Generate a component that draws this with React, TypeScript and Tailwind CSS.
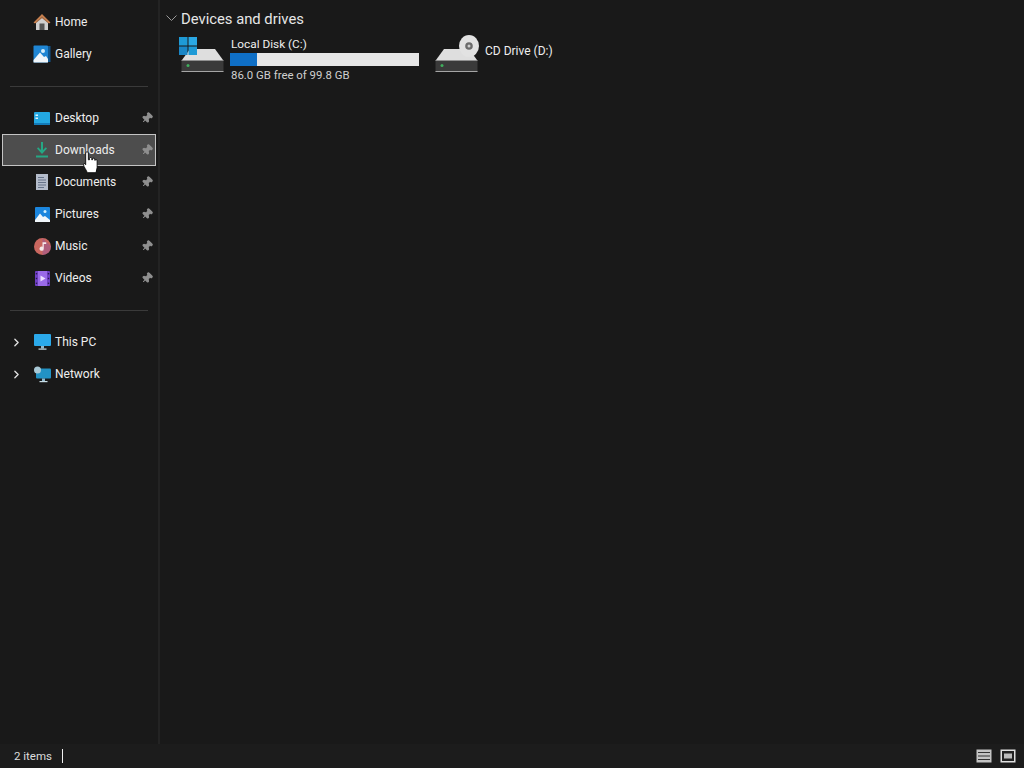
import { ChevronRight, Pin } from "lucide-react";
import type { ReactNode } from "react";

function HomeIcon() {
  return (
    <svg width="18" height="18" viewBox="0 0 18 18">
      <path d="M3 8 9 2.500l6 5.500v9H3z" fill="#cfcfcf" />
      <path d="M0.500 9.500 9 1l8.500 8.500-1.500 1L9 5 2 10.500z" fill="#c9814f" />
      <path d="M3 9 9 3.500 15 9v1L9 5 3 10z" fill="#9c6a48" />
      <rect x="6.500" y="10.500" width="5" height="6.500" fill="#555555" />
    </svg>
  );
}

function GalleryIcon() {
  return (
    <svg width="18" height="18" viewBox="0 0 18 18">
      <rect x="14" y="1" width="3.500" height="16" fill="#12578f" />
      <rect x="0.500" y="0.500" width="14.500" height="17" rx="1" fill="#1f86d4" />
      <circle cx="10" cy="6" r="2" fill="#d5effb" />
      <path d="M0.500 15 7 7.500l4 4.500 2-1 2 3v3.500H0.500z" fill="#f0f6fa" />
    </svg>
  );
}

function DesktopIcon() {
  return (
    <svg width="16" height="13" viewBox="0 0 16 13">
      <rect width="16" height="13" rx="1" fill="#23a8e2" />
      <rect x="1.500" y="2.500" width="2.500" height="1.500" fill="#e2f6ff" />
      <rect x="1.500" y="5.500" width="2.500" height="1.500" fill="#e2f6ff" />
      <rect y="11" width="16" height="2" fill="#127ab8" />
    </svg>
  );
}

function DownloadsIcon() {
  return (
    <svg width="14" height="16" viewBox="0 0 14 16">
      <rect x="6" y="0" width="2" height="9" fill="#25a784" />
      <path d="M2 6.500 3.200 5.300 7 9l3.800-3.700L12 6.500 7 12z" fill="#25a784" />
      <rect x="1" y="13.500" width="12" height="2" fill="#25a784" />
    </svg>
  );
}

function DocumentsIcon() {
  return (
    <svg width="12" height="16" viewBox="0 0 12 16">
      <rect width="12" height="16" fill="#b4bccb" />
      <rect x="2" y="3" width="6" height="1" fill="#66738a" />
      <rect x="2" y="5.500" width="8" height="1" fill="#66738a" />
      <rect x="2" y="8" width="8" height="1" fill="#66738a" />
      <rect x="2" y="10.500" width="8" height="1" fill="#66738a" />
      <rect x="2" y="13" width="6" height="1" fill="#66738a" />
    </svg>
  );
}

function PicturesIcon() {
  return (
    <svg width="15" height="15" viewBox="0 0 15 15">
      <rect width="15" height="15" rx="1" fill="#1b86de" />
      <circle cx="10" cy="4.500" r="1.500" fill="#cfeefc" />
      <path d="M0 13 5 6.500l3 3.500 2-1 5 4v2H0z" fill="#f0f6fa" />
    </svg>
  );
}

function MusicIcon() {
  return (
    <svg width="17" height="17" viewBox="0 0 16 16">
      <circle cx="8" cy="8" r="8" fill="#c9675f" />
      <path d="M16 8a8 8 0 0 1-8 8V0z" fill="#a0588f" opacity="0.6" />
      <path d="M8 4h3.500v1.600H9.200V10a2 2 0 1 1-1.200-1.800z" fill="#f7e9ea" />
    </svg>
  );
}

function VideosIcon() {
  return (
    <svg width="15" height="15" viewBox="0 0 15 15">
      <rect width="15" height="15" rx="1" fill="#6f3fc4" />
      <rect x="3" y="0" width="9" height="15" fill="#9a6ae8" />
      <path d="M5.500 4.500v6l5-3z" fill="#ecdfff" />
      <rect x="0.800" y="2" width="1.400" height="1.400" fill="#2a1a4d" />
      <rect x="0.800" y="6.800" width="1.400" height="1.400" fill="#2a1a4d" />
      <rect x="0.800" y="11.600" width="1.400" height="1.400" fill="#2a1a4d" />
      <rect x="12.800" y="2" width="1.400" height="1.400" fill="#2a1a4d" />
      <rect x="12.800" y="6.800" width="1.400" height="1.400" fill="#2a1a4d" />
      <rect x="12.800" y="11.600" width="1.400" height="1.400" fill="#2a1a4d" />
    </svg>
  );
}

function ThisPcIcon() {
  return (
    <svg width="17" height="16" viewBox="0 0 17 16">
      <rect width="17" height="12" rx="1" fill="#2ba9ea" />
      <rect x="7" y="12" width="3" height="2.500" fill="#8fb8cc" />
      <rect x="4.500" y="14.500" width="8" height="1.200" fill="#c9dde6" />
    </svg>
  );
}

function NetworkIcon() {
  return (
    <svg width="18" height="17" viewBox="0 0 18 17">
      <rect x="3" y="2.500" width="15" height="10" rx="1" fill="#2292c4" />
      <circle cx="4.500" cy="4" r="3.500" fill="#a9c9d6" />
      <rect x="9" y="12.500" width="3" height="2.500" fill="#8fb8cc" />
      <rect x="6.500" y="15" width="8" height="1.200" fill="#c9dde6" />
    </svg>
  );
}

function DriveBody() {
  return (
    <svg width="43" height="23" viewBox="0 0 43 23" className="block">
      <path d="M9 0h25l8 11H1z" fill="#dedede" />
      <rect x="0.500" y="11" width="42" height="12" fill="#3a3a3a" />
      <rect x="0.500" y="11" width="42" height="1" fill="#909090" />
      <rect x="0.500" y="22" width="42" height="1" fill="#a5a5a5" />
      <rect x="5.500" y="15" width="3" height="3" rx="1.500" fill="#3fae5c" />
    </svg>
  );
}

function LocalDiskIcon() {
  return (
    <div className="relative w-[44px] h-[36px]">
      <div className="absolute left-0 bottom-[1px]">
        <DriveBody />
      </div>
      <svg width="18" height="18" viewBox="0 0 18 18" className="absolute left-[-2px] top-0">
        <rect x="0" y="0" width="8.500" height="8.500" fill="#1e9ad6" />
        <rect x="9.500" y="0" width="8.500" height="8.500" fill="#2aa8e4" />
        <rect x="0" y="9.500" width="8.500" height="8.500" fill="#1a86c6" />
        <rect x="9.500" y="9.500" width="8.500" height="8.500" fill="#1e9ad6" />
      </svg>
    </div>
  );
}

function CdDriveIcon() {
  return (
    <div className="relative w-[44px] h-[36px]">
      <div className="absolute left-0 bottom-[1px]">
        <DriveBody />
      </div>
      <svg width="20" height="22" viewBox="0 0 20 22" className="absolute left-[24px] top-[-2px]">
        <ellipse cx="10" cy="11" rx="10" ry="11" fill="#e2e2e2" />
        <circle cx="10" cy="11" r="3.800" fill="#6b6b6b" />
        <circle cx="10" cy="11" r="1.500" fill="#cfcfcf" />
      </svg>
    </div>
  );
}

function HandCursor() {
  return (
    <svg width="15" height="23" viewBox="0 0 14 21" className="absolute left-[83px] top-[151px]">
      <path
        d="M2.500 1.500c0-1.300 2.500-1.300 2.500 0V8l1 0V6.600c0-1 2-1 2.200 0V8h.6V7.200c.2-1 2-1 2.200 0V8.400h.4c.2-.8 1.800-.7 1.800.4V15c0 2-1 3-1 5H4c-.5-2-3.700-6-3.500-7.500C.8 11 2 11.500 2.500 12.500z"
        fill="#ffffff"
        stroke="#000000"
        strokeWidth="0.800"
      />
    </svg>
  );
}

function Row({ icon, label, pinned, active, chevron }: { icon: ReactNode; label: string; pinned?: boolean; active?: boolean; chevron?: boolean }) {
  return (
    <div className={"relative flex items-center h-8 ml-[2px] w-[154px] " + (active ? "bg-[#4d4d4d] border border-[#c4c4c4]" : "")}>
      <div className={"flex items-center w-[31px] justify-center shrink-0 " + (active ? "ml-[-1px]" : "")}>
        {chevron && <ChevronRight size={13} strokeWidth={2.5} className="mr-[2px] text-[#e0e0e0]" />}
      </div>
      <div className="flex items-center justify-center w-[18px] mr-[4px] shrink-0">{icon}</div>
      <span className="text-[#eeeeee] whitespace-nowrap">{label}</span>
      {pinned && <Pin size={12} className={"absolute rotate-45 text-[#8f8f8f] fill-[#8f8f8f] " + (active ? "right-[2px] top-[9px]" : "right-[3px] top-[10px]")} />}
    </div>
  );
}

function Divider() {
  return <div className="h-px bg-[#3a3a3a] ml-[10px] w-[138px]" />;
}

export default function App() {
  return (
    <div
      className="relative flex flex-col h-[768px] w-[1024px] overflow-hidden bg-[#191919] text-[12px] leading-[16px]"
      style={{ fontFamily: 'Roboto, "Liberation Sans", sans-serif' }}
    >
      <div className="flex flex-1 min-h-0">
        {/* nav pane */}
        <aside className="w-[160px] shrink-0 pt-[6px] border-r-2 border-[#232323]">
          <Row icon={<HomeIcon />} label="Home" />
          <Row icon={<GalleryIcon />} label="Gallery" />
          <div className="pt-[16px] pb-[15px]">
            <Divider />
          </div>
          <Row icon={<DesktopIcon />} label="Desktop" pinned />
          <Row icon={<DownloadsIcon />} label="Downloads" pinned active />
          <Row icon={<DocumentsIcon />} label="Documents" pinned />
          <Row icon={<PicturesIcon />} label="Pictures" pinned />
          <Row icon={<MusicIcon />} label="Music" pinned />
          <Row icon={<VideosIcon />} label="Videos" pinned />
          <div className="pt-[16px] pb-[15px]">
            <Divider />
          </div>
          <Row icon={<ThisPcIcon />} label="This PC" chevron />
          <Row icon={<NetworkIcon />} label="Network" chevron />
        </aside>

        {/* main content */}
        <main className="flex-1 pl-[6px] pt-[10px]">
          <div className="flex items-center h-[18px]">
            <svg width="11" height="7" viewBox="0 0 11 7" className="mt-[-1px]">
              <path d="M0.500 0.500 5.500 5.500 10.500 0.500" fill="none" stroke="#9a9a9a" strokeWidth="1" />
            </svg>
            <span className="ml-[4px] text-[14.8px] text-[#e6e6e6]">Devices and drives</span>
          </div>
          <div className="flex mt-[9px] pl-[15px]">
            <div className="flex w-[254px]">
              <LocalDiskIcon />
              <div className="ml-[5px] mt-[-1px] w-[189px] flex flex-col">
                <span className="pl-[1px] text-[11.8px] text-[#eeeeee]">Local Disk (C:)</span>
                <div className="h-[13px] mt-[1px] bg-[#e6e6e6]">
                  <div className="h-full w-[27px] bg-[#0f6fc6]" />
                </div>
                <span className="pl-[1px] mt-[1px] text-[11.4px] text-[#cfcfcf]">86.0 GB free of 99.8 GB</span>
              </div>
            </div>
            <div className="flex items-start h-[36px]">
              <CdDriveIcon />
              <span className="ml-[6px] mt-[6px] text-[#eeeeee]">CD Drive (D:)</span>
            </div>
          </div>
        </main>
      </div>

      {/* status bar */}
      <footer className="flex items-center h-[24px] shrink-0 pl-[14px] pr-[8px] bg-[#1c1c1c]">
        <span className="text-[11.5px] text-[#dddddd]">2 items</span>
        <span className="ml-[10px] w-px h-[14px] bg-[#f0f0f0]" />
        <div className="ml-auto flex items-center gap-[8px]">
          <svg width="16" height="14" viewBox="0 0 16 14">
            <rect x="0.500" y="0.500" width="15" height="13" fill="#c4c4c4" />
            <rect x="2" y="3" width="12" height="1" fill="#333333" />
            <rect x="2" y="6.500" width="12" height="1" fill="#333333" />
            <rect x="2" y="10" width="12" height="1" fill="#333333" />
          </svg>
          <svg width="16" height="14" viewBox="0 0 16 14">
            <rect x="0.500" y="0.500" width="15" height="13" fill="#e0e0e0" />
            <rect x="2" y="2" width="12" height="10" fill="#222222" />
            <rect x="4" y="4.500" width="8" height="5" fill="#bdbdbd" />
          </svg>
        </div>
      </footer>

      <HandCursor />
    </div>
  );
}
